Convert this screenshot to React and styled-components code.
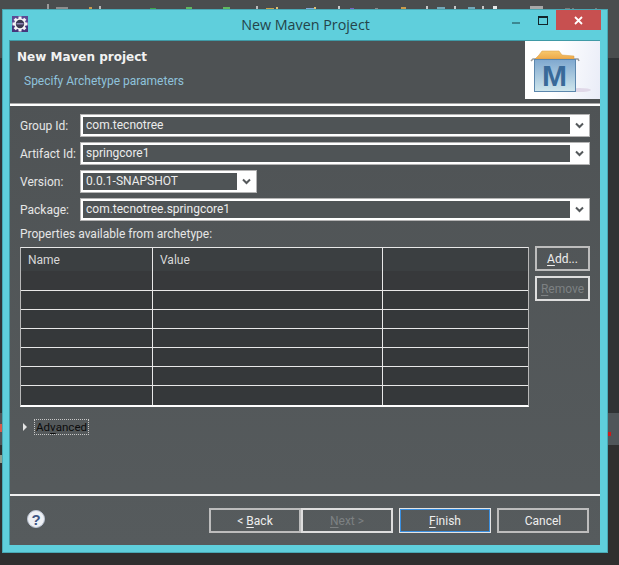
import styled, { createGlobalStyle } from 'styled-components';

const GlobalStyle = createGlobalStyle`
  html, body { margin: 0; padding: 0; background: #2f2f2f; }
  body { font-family: Roboto, "Open Sans", sans-serif; font-size: 12px; }
  u { text-underline-offset: 2px; }
`;

const Desktop = styled.div`
  position: relative;
  width: 619px;
  height: 565px;
  overflow: hidden;
  background: linear-gradient(#4a4d4e 0, #4a4d4e 58px, #303335 58px, #303335 413px, #50565a 413px, #50565a 445px, #2f2f2f 445px);
  padding: 9px 0 0 2px;
  box-sizing: border-box;
`;

const Crumb = styled.i`
  position: absolute;
  top: ${p => p.$top || 7}px;
  left: ${p => p.$left}px;
  width: ${p => p.$w || 4}px;
  height: ${p => p.$h || 2}px;
  background: ${p => p.$c};
`;

const Frame = styled.div`
  width: 606px;
  height: 544px;
  box-sizing: border-box;
  background: #5fcfdc;
  border: 1px solid #49a9b5;
  display: flex;
  flex-direction: column;
  padding: 0 7px 7px 6px;
`;

const TitleBar = styled.div`
  position: relative;
  height: 29px;
  flex: none;
  display: flex;
  align-items: center;
  justify-content: center;
  color: #24444a;
  font-family: "Open Sans", sans-serif;
  font-size: 14.3px;
  padding: 0 0 1px 2px;
`;

const TitleIcon = styled.svg`
  position: absolute;
  left: 3px;
  top: 6px;
`;

const Controls = styled.div`
  position: absolute;
  right: -1px;
  top: 0;
  height: 20px;
  display: flex;
  align-items: flex-start;
`;

const MinBtn = styled.span`
  width: 8px;
  height: 2px;
  margin-top: 12px;
  background: #3c8791;
  margin-right: 18px;
`;

const MaxBtn = styled.span`
  width: 8px;
  height: 6px;
  margin-top: 6px;
  margin-right: 8px;
  border: 1px solid #12262a;
  border-top-width: 2px;
`;

const CloseBtn = styled.span`
  width: 45px;
  height: 20px;
  background: #c75050;
  color: #fff;
  display: flex;
  align-items: center;
  justify-content: center;
`;

const Panel = styled.div`
  flex: 1;
  min-height: 0;
  display: flex;
  flex-direction: column;
  background: linear-gradient(#4e5254, #565b5d);
  border-top: 1px solid #3f9aa6;
  border-left: 1px solid #3f9aa6;
`;

const Header = styled.div`
  height: 62px;
  flex: none;
  display: flex;
  justify-content: space-between;
  border-bottom: 1px solid #a8a8a8;
  background: #4e5254;
`;

const HeaderText = styled.div`
  padding: 9px 0 0 7px;
`;

const WizardTitle = styled.div`
  font-family: "DejaVu Sans", sans-serif;
  font-weight: 700;
  font-size: 12px;
  line-height: 15px;
  color: #f2f2f2;
`;

const WizardSubtitle = styled.div`
  margin: 9px 0 0 7px;
  line-height: 14px;
  font-size: 12px;
  color: #8fc3dc;
`;

const Banner = styled.div`
  width: 75px;
  height: 58px;
  background: linear-gradient(100deg, #fff 40%, #e9ecf7);
`;

const Body = styled.div`
  flex: 1;
  min-height: 0;
  border-top: 2px solid #fff;
  padding: 8px 10px 0 10px;
  display: flex;
  flex-direction: column;
`;

const FieldRow = styled.div`
  display: grid;
  grid-template-columns: 60px ${p => (p.$short ? '177px' : '510px')};
  align-items: center;
  height: 23px;
  margin-bottom: 5px;
  color: #e6e6e6;
`;

const Combo = styled.div`
  height: 23px;
  box-sizing: border-box;
  border: 1px solid #b4b4b4;
  background: #fff;
  padding: 2px 0 2px 2px;
  display: flex;
`;

const ComboValue = styled.div`
  flex: 1;
  background: #4f5456;
  color: #ececec;
  padding-left: 3px;
  line-height: 16px;
`;

const ComboArrow = styled.div`
  width: 19px;
  display: flex;
  align-items: center;
  justify-content: center;
`;

const SectionLabel = styled.div`
  color: #e6e6e6;
  line-height: 16px;
`;

const PropsArea = styled.div`
  display: flex;
  gap: 6px;
  margin-top: 4px;
`;

const Grid = styled.div`
  width: 509px;
  height: 160px;
  box-sizing: border-box;
  margin-top: 1px;
  background: #35383a;
  border: 1px solid #b8b8b8;
  border-bottom: 2px solid #fff;
  border-top-color: #e8e8e8;
  display: flex;
  flex-direction: column;
`;

const GridRow = styled.div`
  display: grid;
  grid-template-columns: 132px 230px 1fr;
  height: ${p => (p.$head ? '43px' : '19px')};
  box-sizing: border-box;
  flex: none;
  border-bottom: ${p => (p.$last ? 'none' : '1px solid #e8e8e8')};
  background: ${p => (p.$head ? 'linear-gradient(#3b3f41 55%, #37393b 55%)' : 'transparent')};
`;

const GridCell = styled.div`
  border-right: ${p => (p.$end ? 'none' : '1px solid #e8e8e8')};
  padding: 4px 0 0 7px;
  color: #d8d8d8;
  line-height: 16px;
`;

const SideButtons = styled.div`
  display: flex;
  flex-direction: column;
  gap: 5px;
`;

const Btn = styled.div`
  width: ${p => p.$w || 92}px;
  height: 25px;
  box-sizing: border-box;
  border: 2px solid ${p => (p.$disabled ? '#dedede' : p.$primary ? '#3a8fe0' : '#bdbdbd')};
  outline: ${p => (p.$primary ? '1px solid #e4e4e4' : 'none')};
  outline-offset: -1px;
  display: flex;
  align-items: center;
  justify-content: center;
  color: ${p => (p.$disabled ? '#7d8183' : '#eeeeee')};
  line-height: 1;
`;

const AdvancedRow = styled.div`
  display: flex;
  align-items: center;
  margin: 12px 0 0 3px;
  height: 16px;
`;

const Twisty = styled.span`
  width: 0;
  height: 0;
  border-left: 4px solid #e4e4e4;
  border-top: 4px solid transparent;
  border-bottom: 4px solid transparent;
  margin-right: 8px;
`;

const AdvancedLabel = styled.span`
  color: #0c0c0c;
  border: 1px dotted #c8c8c8;
  padding: 0 1px;
  margin-left: -1px;
  font-size: 11.6px;
  line-height: 14px;
`;

const Footer = styled.div`
  height: 51px;
  flex: none;
  border-top: 2px solid #f0f0f0;
  display: flex;
  align-items: center;
  padding: 0 11px 0 17px;
  box-sizing: border-box;
  margin: auto -10px 0 -10px;
`;

const Help = styled.span`
  width: 18px;
  height: 18px;
  border-radius: 50%;
  background: #eef0f4;
  border: 1px solid #b9c2d2;
  box-sizing: border-box;
  color: #3f5685;
  font-family: "Liberation Sans", sans-serif;
  font-weight: 700;
  font-size: 15px;
  display: flex;
  align-items: center;
  justify-content: center;
  margin-bottom: 3px;
`;

const FooterButtons = styled.div`
  margin-left: auto;
  display: flex;
  gap: 6px;
`;

const NavPair = styled.div`
  display: flex;
`;

function Chevron({ color = '#55595b' }) {
  return (
    <svg width="9" height="7" viewBox="0 0 9 7">
      <path d="M1 1.5 L4.5 5 L8 1.5" fill="none" stroke={color} strokeWidth="2" />
    </svg>
  );
}

function GearIcon() {
  const teeth = [0, 45, 90, 135, 180, 225, 270, 315];
  return (
    <TitleIcon width="16" height="16" viewBox="0 0 16 16">
      <rect width="16" height="16" fill="#5c4a94" />
      <rect y="9" width="16" height="7" fill="#46367c" />
      {teeth.map(a => (
        <rect key={a} x="6.5" y="0.5" width="3" height="3" fill="#f4f4f4" transform={`rotate(${a} 8 8)`} />
      ))}
      <circle cx="8" cy="8" r="5" fill="#3c3a52" stroke="#f4f4f4" strokeWidth="1.6" />
      <rect x="4.5" y="7" width="7" height="1.5" fill="#8d84b4" />
    </TitleIcon>
  );
}

function MavenLogo() {
  return (
    <svg width="75" height="58" viewBox="0 0 75 58">
      <defs>
        <linearGradient id="box" x1="0" y1="0" x2="0" y2="1">
          <stop offset="0" stopColor="#7fa8cf" />
          <stop offset="1" stopColor="#cfe6ec" />
        </linearGradient>
        <linearGradient id="lid" x1="0" y1="0" x2="0" y2="1">
          <stop offset="0" stopColor="#f7c86d" />
          <stop offset="1" stopColor="#eda94a" />
        </linearGradient>
      </defs>
      <ellipse cx="54" cy="49" rx="12" ry="2" fill="#e0d8e8" />
      <path d="M6 20 L8 18 L53 18 L54 20" fill="none" stroke="#9a9a9a" strokeWidth="1.5" />
      <path d="M10 18 L14 14 L17 10 L34 10 L37 14 L49 15 L49 18 Z" fill="url(#lid)" stroke="#d69a45" strokeWidth="0.5" />
      <rect x="9.5" y="18.5" width="41" height="32" fill="url(#box)" stroke="#5c87ad" strokeWidth="1" />
      <text x="29.5" y="45" textAnchor="middle" fontFamily="Liberation Sans" fontWeight="700" fontSize="30" fill="#396a99">M</text>
    </svg>
  );
}

const fields = [
  { label: 'Group Id:', value: 'com.tecnotree' },
  { label: 'Artifact Id:', value: 'springcore1' },
  { label: 'Version:', value: '0.0.1-SNAPSHOT', short: true },
  { label: 'Package:', value: 'com.tecnotree.springcore1' },
];

// bits of the desktop icons sticking out above the window
const crumbs = [
  [47, 2, 5, '#9a9a9a'], [56, 12, 2, '#8d8d8d'], [89, 3, 2, '#c99a4a'], [99, 2, 3, '#b8b8b8'],
  [150, 6, 1, '#3fa34a'], [186, 6, 2, '#5fb85f'], [223, 7, 2, '#5fb85f'], [256, 2, 3, '#bbbbbb'],
  [266, 8, 1, '#c9a34a'], [276, 2, 2, '#e0c070'], [306, 8, 1, '#7fa8d8'], [314, 2, 2, '#e0c070'],
  [338, 2, 3, '#c8c8c8'], [350, 4, 1, '#7a5fc0'], [375, 3, 1, '#8a8a8a'], [401, 5, 2, '#c99a4a'],
  [426, 2, 3, '#c8c8c8'], [437, 8, 2, '#73a8b8'], [454, 2, 3, '#c8c8c8'], [468, 7, 2, '#73a8b8'],
  [482, 2, 3, '#c8c8c8'], [493, 4, 3, '#e8e8e8'], [530, 13, 3, '#a8a8a8'], [565, 5, 1, '#7a7a7a'],
  [572, 2, 1, '#7a7a7a'], [595, 2, 1, '#7a7a7a'],
];

export default function App() {
  return (
    <>
      <GlobalStyle />
      <Desktop>
        {crumbs.map(([left, w, h, c]) => (
          <Crumb key={left} $left={left} $w={w} $h={h} $c={c} $top={9 - h} />
        ))}
        <Crumb $left={0} $top={424} $w={2} $h={8} $c="#d85a4a" />
        <Crumb $left={0} $top={455} $w={2} $h={8} $c="#8fa08f" />
        <Crumb $left={608} $top={432} $w={3} $h={4} $c="#d01818" />
        <Frame>
          <TitleBar>
            <GearIcon />
            New Maven Project
            <Controls>
              <MinBtn />
              <MaxBtn />
              <CloseBtn>
                <svg width="9" height="9" viewBox="0 0 9 9">
                  <path d="M1 1 L8 8 M8 1 L1 8" stroke="#fff" strokeWidth="1.8" />
                </svg>
              </CloseBtn>
            </Controls>
          </TitleBar>
          <Panel>
            <Header>
              <HeaderText>
                <WizardTitle>New Maven project</WizardTitle>
                <WizardSubtitle>Specify Archetype parameters</WizardSubtitle>
              </HeaderText>
              <Banner>
                <MavenLogo />
              </Banner>
            </Header>
            <Body>
              {fields.map(f => (
                <FieldRow key={f.label} $short={f.short}>
                  <span>{f.label}</span>
                  <Combo>
                    <ComboValue>{f.value}</ComboValue>
                    <ComboArrow>
                      <Chevron />
                    </ComboArrow>
                  </Combo>
                </FieldRow>
              ))}
              <SectionLabel>Properties available from archetype:</SectionLabel>
              <PropsArea>
                <Grid>
                  <GridRow $head>
                    <GridCell>Name</GridCell>
                    <GridCell>Value</GridCell>
                    <GridCell $end />
                  </GridRow>
                  {[0, 1, 2, 3, 4, 5].map(i => (
                    <GridRow key={i} $last={i === 5}>
                      <GridCell />
                      <GridCell />
                      <GridCell $end />
                    </GridRow>
                  ))}
                </Grid>
                <SideButtons>
                  <Btn $w={55}><span><u>A</u>dd...</span></Btn>
                  <Btn $w={55} $disabled><span><u>R</u>emove</span></Btn>
                </SideButtons>
              </PropsArea>
              <AdvancedRow>
                <Twisty />
                <AdvancedLabel>Ad<u>v</u>anced</AdvancedLabel>
              </AdvancedRow>
              <Footer>
                <Help>?</Help>
                <FooterButtons>
                  <NavPair>
                    <Btn><span>&lt; <u>B</u>ack</span></Btn>
                    <Btn $disabled><span><u>N</u>ext &gt;</span></Btn>
                  </NavPair>
                  <Btn $primary><span><u>F</u>inish</span></Btn>
                  <Btn>Cancel</Btn>
                </FooterButtons>
              </Footer>
            </Body>
          </Panel>
        </Frame>
      </Desktop>
    </>
  );
}
